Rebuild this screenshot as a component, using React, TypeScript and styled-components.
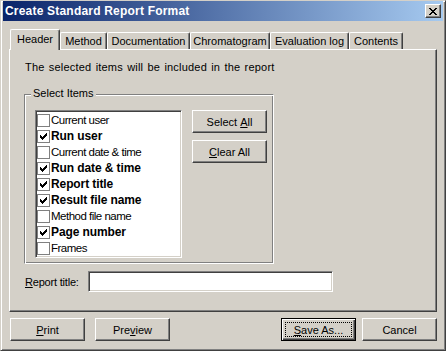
import React from 'react';
import styled, { createGlobalStyle, css } from 'styled-components';

/* ================================
              Types
================================ */
interface IReportItem {
    label: string,
    checked: boolean,
}

interface ITabProps {
    $active?: boolean,
    $width: number,
}

interface IButtonProps {
    $default?: boolean,
}

/* ================================
              Data
================================ */
const tabs = [
    { label: 'Header', width: 50 },
    { label: 'Method', width: 47 },
    { label: 'Documentation', width: 83 },
    { label: 'Chromatogram', width: 80 },
    { label: 'Evaluation log', width: 79 },
    { label: 'Contents', width: 54 },
];

const items: IReportItem[] = [
    { label: 'Current user', checked: false },
    { label: 'Run user', checked: true },
    { label: 'Current date & time', checked: false },
    { label: 'Run date & time', checked: true },
    { label: 'Report title', checked: true },
    { label: 'Result file name', checked: true },
    { label: 'Method file name', checked: false },
    { label: 'Page number', checked: true },
    { label: 'Frames', checked: false },
];

/* ================================
               Styles
================================ */
const GlobalStyle = createGlobalStyle`
    body {
        margin: 0;
        background: #d4d0c8;
        font-family: "Liberation Sans", Arial, sans-serif;
        font-size: 11px;
        color: #000;
    }
`;

const raised = css`
    border: 1px solid;
    border-color: #fff #404040 #404040 #fff;
    box-shadow: inset -1px -1px #808080;
`;

const sunken = css`
    border: 1px solid;
    border-color: #808080 #fff #fff #808080;
    box-shadow: inset 1px 1px #404040, inset -1px -1px #d4d0c8;
    background: #fff;
`;

const Window = styled.div`
    width: 446px;
    height: 351px;
    box-sizing: border-box;
    background: #d4d0c8;
    border: 1px solid;
    border-color: #d4d0c8 #404040 #404040 #d4d0c8;
    box-shadow: inset 1px 1px #fff, inset -1px -1px #808080;
    padding: 0 2px 2px 2px;
    display: flex;
    flex-direction: column;
`;

const TitleBar = styled.div`
    height: 20px;
    background: linear-gradient(90deg, #0a246a 0%, #a6caf0 100%);
    display: flex;
    align-items: center;
    justify-content: space-between;
    padding: 0 2px 0 2px;
`;

const TitleText = styled.div`
    color: #fff;
    font-weight: bold;
    font-size: 12px;
    letter-spacing: 0.2px;
    white-space: nowrap;
`;

const CloseButton = styled.div`
    ${raised};
    width: 16px;
    height: 14px;
    box-sizing: border-box;
    background: #d4d0c8;
    display: flex;
    align-items: center;
    justify-content: center;
`;

const Body = styled.div`
    display: flex;
    flex-direction: column;
    padding: 8px 6px 0 6px;
`;

const TabStrip = styled.div`
    display: flex;
    align-items: flex-end;
    height: 21px;
    margin-bottom: -1px;
    padding-left: 1px;
    position: relative;
    z-index: 1;
`;

const Tab = styled.div<ITabProps>`
    width: ${(props) => props.$width}px;
    box-sizing: border-box;
    height: ${(props) => (props.$active ? 21 : 17)}px;
    margin-bottom: ${(props) => (props.$active ? 0 : 1)}px;
    border-top: 1px solid #fff;
    border-left: 1px solid #fff;
    border-right: 1px solid #404040;
    border-radius: 2px 2px 0 0;
    box-shadow: inset -1px 0 #808080;
    background: #d4d0c8;
    display: flex;
    align-items: center;
    justify-content: center;
    white-space: nowrap;
    padding-bottom: ${(props) => (props.$active ? 2 : 0)}px;
`;

const Panel = styled.div`
    height: 263px;
    box-sizing: border-box;
    border: 1px solid;
    border-color: #fff #404040 #404040 #fff;
    box-shadow: inset -1px -1px #808080;
    display: flex;
    flex-direction: column;
    padding-left: 14px;
`;

const Intro = styled.div`
    margin: 11px 0 0 1px;
    line-height: 13px;
    letter-spacing: 0.2px;
    word-spacing: 1px;
    white-space: nowrap;
`;

const GroupBox = styled.div`
    position: relative;
    margin-top: 20px;
    width: 250px;
    height: 170px;
    box-sizing: border-box;
    border: 1px solid;
    border-color: #808080 #fff #fff #808080;
    box-shadow: inset 1px 1px #fff, inset -1px -1px #808080;
    display: flex;
    gap: 10px;
    padding: 15px 0 0 10px;
`;

const Legend = styled.div`
    position: absolute;
    top: -8px;
    left: 6px;
    padding: 0 2px;
    line-height: 13px;
    background: #d4d0c8;
`;

const ListBox = styled.div`
    ${sunken};
    width: 147px;
    height: 148px;
    box-sizing: border-box;
    padding: 1px;
    display: flex;
    flex-direction: column;
`;

const ListItem = styled.div<{ $bold: boolean }>`
    height: 16px;
    display: flex;
    align-items: center;
    white-space: nowrap;
    font-weight: ${(props) => (props.$bold ? 'bold' : 'normal')};
    font-size: ${(props) => (props.$bold ? 12 : 11.5)}px;
    letter-spacing: ${(props) => (props.$bold ? -0.1 : -0.5)}px;
`;

const CheckBox = styled.div`
    width: 13px;
    height: 13px;
    box-sizing: border-box;
    border: 1px solid #808080;
    background: #fff;
    display: flex;
    align-items: center;
    justify-content: center;
    flex-shrink: 0;
    margin-right: 1px;
`;

const ButtonColumn = styled.div`
    display: flex;
    flex-direction: column;
    gap: 7px;
`;

const Button = styled.div<IButtonProps>`
    width: 75px;
    height: 23px;
    box-sizing: border-box;
    background: #d4d0c8;
    display: flex;
    align-items: center;
    justify-content: center;
    ${(props) => (props.$default
        ? css`
            border: 1px solid #000;
            box-shadow: inset 1px 1px #fff, inset -1px -1px #404040, inset -2px -2px #808080;
            padding: 3px;
        `
        : raised)};
`;

const FocusRect = styled.div`
    flex: 1;
    align-self: stretch;
    border: 1px dotted #000;
    display: flex;
    align-items: center;
    justify-content: center;
`;

const FieldRow = styled.div`
    display: flex;
    align-items: center;
    margin: 7px 0 0 1px;
`;

const FieldLabel = styled.div`
    width: 63px;
    letter-spacing: -0.2px;
`;

const TextInput = styled.div`
    ${sunken};
    width: 245px;
    height: 21px;
    box-sizing: border-box;
`;

const ButtonRow = styled.div`
    display: flex;
    justify-content: space-between;
    margin: 6px 0 0 1px;
`;

const ButtonGroup = styled.div<{ $gap: number }>`
    display: flex;
    gap: ${(props) => props.$gap}px;
`;

/* ================================
              Main
================================ */
function CheckMark() {
    return (
        <svg width="7" height="7" viewBox="0 0 7 7" shapeRendering="crispEdges">
            <path d="M6 0h1v3h-1v1h-1v1h-1v1h-1v1h-1v-1h-1v-1h-1v-3h1v1h1v1h1v-1h1v-1h1z" fill="#000" />
        </svg>
    );
}

function CloseGlyph() {
    return (
        <svg width="8" height="7" viewBox="0 0 8 7" shapeRendering="crispEdges">
            <path d="M0 0h2v1h1v1h2v-1h1v-1h2v1h-1v1h-1v1h-1v1h1v1h1v1h1v1h-2v-1h-1v-1h-2v1h-1v1h-2v-1h1v-1h1v-1h1v-1h-1v-1h-1v-1h-1z" fill="#000" />
        </svg>
    );
}

export default function App() {
    return (
        <>
            <GlobalStyle />
            <Window>
                <TitleBar>
                    <TitleText>Create Standard Report Format</TitleText>
                    <CloseButton><CloseGlyph /></CloseButton>
                </TitleBar>
                <Body>
                    <TabStrip>
                        {tabs.map((tab, i) => (
                            <Tab key={tab.label} $active={i === 0} $width={tab.width}>{tab.label}</Tab>
                        ))}
                    </TabStrip>
                    <Panel>
                        <Intro>The selected items will be included in the report</Intro>
                        <GroupBox>
                            <Legend>Select Items</Legend>
                            <ListBox>
                                {items.map((item) => (
                                    <ListItem key={item.label} $bold={item.checked}>
                                        <CheckBox>{item.checked && <CheckMark />}</CheckBox>
                                        {item.label}
                                    </ListItem>
                                ))}
                            </ListBox>
                            <ButtonColumn>
                                <Button>Select&nbsp;<u>A</u>ll</Button>
                                <Button><u>C</u>lear All</Button>
                            </ButtonColumn>
                        </GroupBox>
                        <FieldRow>
                            <FieldLabel><u>R</u>eport title:</FieldLabel>
                            <TextInput />
                        </FieldRow>
                    </Panel>
                    <ButtonRow>
                        <ButtonGroup $gap={10}>
                            <Button><u>P</u>rint</Button>
                            <Button>Pre<u>v</u>iew</Button>
                        </ButtonGroup>
                        <ButtonGroup $gap={6}>
                            <Button $default><FocusRect><u>S</u>ave As...</FocusRect></Button>
                            <Button>Cancel</Button>
                        </ButtonGroup>
                    </ButtonRow>
                </Body>
            </Window>
        </>
    );
}
